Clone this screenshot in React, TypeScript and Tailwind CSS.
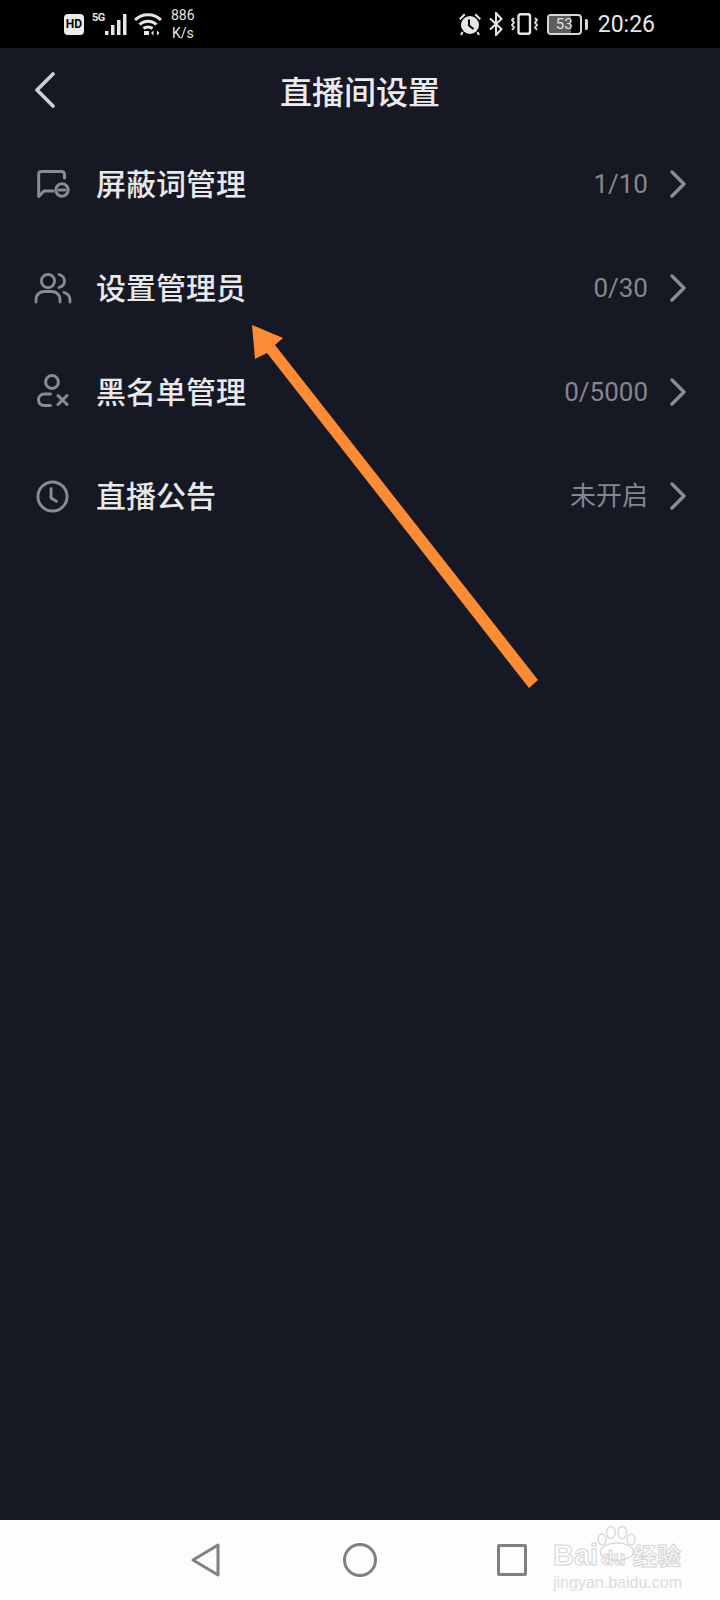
import type { ReactNode } from 'react';

const cjk = "font-['Roboto','Noto_Sans_CJK_SC',sans-serif]";

function BlockIcon() {
  return (
    <svg width="33" height="29" viewBox="0 0 33 29" className="ml-[3px]" fill="none" stroke="#8b8c93" strokeWidth="3" strokeLinecap="round" strokeLinejoin="round">
      <path d="M16 21H7L1.7 26.5V4.5C1.7 2.8 2.8 1.6 4.5 1.6H24.5C26.4 1.6 27.5 3 27.5 4.8V8" />
      <circle cx="25" cy="20" r="6.2" />
      <path d="M22 20H28" />
    </svg>
  );
}

function AdminIcon() {
  return (
    <svg width="38" height="32" viewBox="0 0 38 32" fill="none" stroke="#8b8c93" strokeWidth="2.8" strokeLinecap="round">
      <circle cx="14" cy="9" r="6.6" />
      <path d="M2 30V27.5C2 22.5 6 19.5 10.5 19.5H17.5C22 19.5 26 22.5 26 27.5V30" />
      <path d="M25 2.5C28.5 3.5 30.5 6 30.5 9C30.5 12 28.5 14.5 25 15.5" />
      <path d="M30 20.5C33.5 21.5 36 24 36 28V30" />
    </svg>
  );
}

function BlacklistIcon() {
  return (
    <svg width="32" height="36" viewBox="0 0 32 36" className="ml-[3px]" fill="none" stroke="#8b8c93" strokeWidth="3" strokeLinecap="round">
      <circle cx="15" cy="8" r="6.4" />
      <path d="M13.5 20H7.5C3.8 20 1.5 22.6 1.5 25.7C1.5 29 3.8 31.6 7.5 31.6H13.5" />
      <path d="M21 21.5L30 30.5M30 21.5L21 30.5" />
    </svg>
  );
}

function ClockIcon() {
  return (
    <svg width="33" height="33" viewBox="0 0 34 34" className="ml-[2px]" fill="none" stroke="#8b8c93" strokeWidth="3" strokeLinecap="round" strokeLinejoin="round">
      <circle cx="17" cy="17" r="15" />
      <path d="M15.5 9V18.5L21 22" />
    </svg>
  );
}

function Chevron() {
  return (
    <svg width="18" height="28" viewBox="0 0 18 28" fill="none" stroke="#8b8c93" strokeWidth="3.4" strokeLinecap="round" strokeLinejoin="round">
      <path d="M3 2L15 14L3 26" />
    </svg>
  );
}

function Row({ icon, label, value }: { icon: ReactNode; label: string; value: string }) {
  return (
    <div className="flex h-[104px] items-center pl-[34px] pr-[33px]">
      <div className="flex w-[63px] shrink-0 items-center">{icon}</div>
      <span className="-ml-[1px] mt-[2px] text-[30px] font-medium leading-none text-[#e9e9ec]">{label}</span>
      <span className="ml-auto text-[26px] leading-none text-[#85868e]">{value}</span>
      <div className="ml-[21px] flex w-[18px] items-center">
        <Chevron />
      </div>
    </div>
  );
}

function StatusBar() {
  return (
    <div className="flex h-[48px] shrink-0 items-center justify-between bg-black pl-[64px] pr-[65px] text-[#e6e6e6]">
      <div className="flex items-center">
        <div className="flex h-[21px] w-[20px] items-center justify-center rounded-[4px] bg-[#ececec] text-[12px] font-bold leading-none text-black">HD</div>
        <span className="mb-[14px] ml-[8px] w-[13px] text-[11px] font-bold leading-none tracking-[-0.5px]">5G</span>
        <svg width="24" height="24" viewBox="0 0 24 24" className="mt-[2px]" fill="#e6e6e6">
          <rect x="0" y="18" width="3.5" height="4" />
          <rect x="6" y="12" width="3.5" height="10" />
          <rect x="12" y="7" width="3.5" height="15" />
          <rect x="18" y="1" width="3.5" height="21" />
        </svg>
        <svg width="28" height="24" viewBox="0 0 28 24" className="ml-[5px]" fill="none" stroke="#e6e6e6" strokeWidth="3">
          <path d="M1 8C8 1 20 1 27 8" />
          <path d="M5.5 12.5C10 8 18 8 22.5 12.5" />
          <path d="M9.5 16.5C12 14.5 16 14.5 18.5 16.5" />
          <rect x="10" y="19" width="5" height="4" fill="#e6e6e6" stroke="none" />
          <path d="M19.5 18.5L17 21L19.5 23.5ZM23 18.5L25.5 21L23 23.5Z" fill="#e6e6e6" stroke="none" />
        </svg>
        <div className="ml-[9px] flex flex-col items-center text-[14px] leading-[18px]">
          <span>886</span>
          <span>K/s</span>
        </div>
      </div>
      <div className="flex items-center">
        <svg width="24" height="24" viewBox="0 0 24 24" fill="#e6e6e6">
          <path d="M1 6.5L6 1.5L7.5 3L2.5 8ZM23 6.5L18 1.5L16.5 3L21.5 8Z" />
          <circle cx="12" cy="13" r="9" />
          <path d="M4.5 20L3 23M19.5 20L21 23" stroke="#e6e6e6" strokeWidth="2" />
          <path d="M11 7.5V13.5L15.5 17" fill="none" stroke="#000" strokeWidth="2" />
        </svg>
        <svg width="14" height="24" viewBox="0 0 14 24" className="ml-[7px]" fill="none" stroke="#e6e6e6" strokeWidth="2">
          <path d="M1 6.5L12.5 17L7 23V1L12.5 7L1 17.5" />
        </svg>
        <svg width="27" height="22" viewBox="0 0 27 22" className="ml-[8px]" fill="none" stroke="#e6e6e6" strokeWidth="2.4">
          <rect x="7.5" y="1.2" width="11.5" height="19.6" rx="2" />
          <path d="M3 5L1 7L3 9.5L1 12L3 14.5L1 17M24 5L26 7L24 9.5L26 12L24 14.5L26 17" strokeWidth="1.8" />
        </svg>
        <div className="relative ml-[9px] flex h-[21px] w-[35px] items-center justify-center overflow-hidden rounded-[4px] border-2 border-[#d8d8d8] text-[15px] leading-none">
          <div className="absolute inset-y-0 left-0 w-[72%] bg-[#5c5c5c]" />
          <span className="relative">53</span>
        </div>
        <div className="ml-[3px] h-[11px] w-[3px] rounded-r-[2px] bg-[#d8d8d8]" />
        <span className="ml-[10px] text-[23px] leading-none">20:26</span>
      </div>
    </div>
  );
}

function NavBar() {
  return (
    <div className="relative flex h-[80px] shrink-0 items-center bg-[#fdfdfd] pl-[190px]">
      <svg width="32" height="36" viewBox="0 0 32 36" fill="none" stroke="#808080" strokeWidth="3" strokeLinejoin="round">
        <path d="M28 3V33L3 18Z" />
      </svg>
      <svg width="34" height="34" viewBox="0 0 34 34" className="ml-[121px]" fill="none" stroke="#808080" strokeWidth="3">
        <circle cx="17" cy="17" r="15.5" />
      </svg>
      <div className="ml-[120px] h-[32px] w-[30px] rounded-[2px] border-[3px] border-[#808080]" />
      <Watermark />
    </div>
  );
}

// baidu watermark, sits over the nav bar
function Watermark() {
  return (
    <div className="absolute left-[553px] top-0 flex h-[80px] w-[130px] flex-col text-[#dedede]">
      <svg width="42" height="40" viewBox="0 0 48 40" className="absolute left-[43px] top-[3px]" fill="#fdfdfd" stroke="#d8d8d8" strokeWidth="1.6">
        <ellipse cx="7" cy="16" rx="4.5" ry="6" />
        <ellipse cx="17" cy="8" rx="5" ry="7" />
        <ellipse cx="30" cy="8" rx="5" ry="7" />
        <ellipse cx="40" cy="16" rx="4.5" ry="6" />
        <ellipse cx="24" cy="30" rx="19" ry="10" />
      </svg>
      <div className="relative mt-[21px] flex items-baseline font-['Liberation_Sans',sans-serif] text-[29px] font-bold leading-none text-transparent [-webkit-text-stroke:1px_#d4d4d4]">
        <span className="w-[48px]">Bai</span>
        <span className="w-[32px] text-[20px]">du</span>
        <span className="font-['Noto_Sans_CJK_SC',sans-serif] text-[24px]">经验</span>
      </div>
      <span className="relative mt-[5px] whitespace-nowrap font-['Liberation_Sans',sans-serif] text-[16px] leading-none text-[#dcdcdc]">jingyan.baidu.com</span>
    </div>
  );
}

export default function App() {
  return (
    <div className={`relative flex h-[1600px] w-[720px] flex-col overflow-hidden bg-[#161924] ${cjk}`}>
      <StatusBar />
      <div className="relative flex h-[84px] shrink-0 items-center justify-center">
        <svg width="22" height="36" viewBox="0 0 22 36" className="absolute left-[34px] top-[24px]" fill="none" stroke="#d0d0d4" strokeWidth="3.6" strokeLinecap="round" strokeLinejoin="round">
          <path d="M19 2L3 18L19 34" />
        </svg>
        <span className="mt-[5px] text-[32px] font-medium leading-none text-[#ececef]">直播间设置</span>
      </div>
      <div className="flex flex-col">
        <Row icon={<BlockIcon />} label="屏蔽词管理" value="1/10" />
        <Row icon={<AdminIcon />} label="设置管理员" value="0/30" />
        <Row icon={<BlacklistIcon />} label="黑名单管理" value="0/5000" />
        <Row icon={<ClockIcon />} label="直播公告" value="未开启" />
      </div>
      <div className="flex-1" />
      <NavBar />
      {/* annotation arrow */}
      <svg width="720" height="1600" viewBox="0 0 720 1600" className="pointer-events-none absolute left-0 top-0">
        <path d="M252 325L283 338L275 345L538 680L529 688L267 353L255 359Z" fill="#fb8b35" />
      </svg>
    </div>
  );
}
